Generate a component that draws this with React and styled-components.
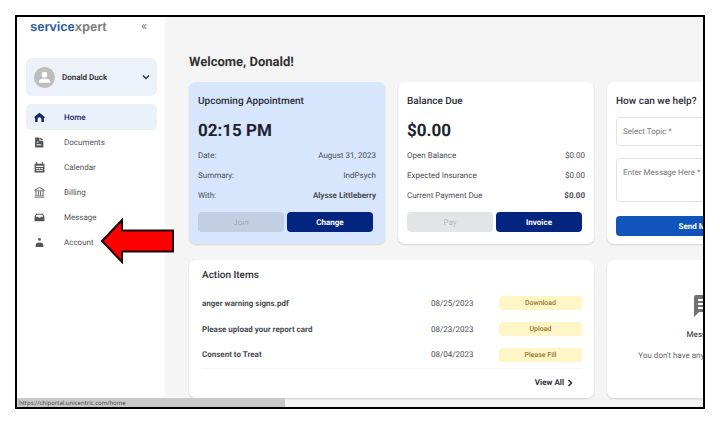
import React from "react";
import styled, { createGlobalStyle } from "styled-components";

const navItems = [
  { label: "Home", icon: "home", active: true },
  { label: "Documents", icon: "documents" },
  { label: "Calendar", icon: "calendar" },
  { label: "Billing", icon: "billing" },
  { label: "Message", icon: "message" },
  { label: "Account", icon: "account", pointed: true },
];

const actionItems = [
  { name: "anger warning signs.pdf", date: "08/25/2023", action: "Download" },
  { name: "Please upload your report card", date: "08/23/2023", action: "Upload" },
  { name: "Consent to Treat", date: "08/04/2023", action: "Please Fill" },
];

const icons = {
  home: (
    <path d="M10 1.500 1 8.500v2.500l1 0V18h4.500v-5a3.500 3.500 0 0 1 7 0v5H18v-7h1V8.500z" />
  ),
  documents: (
    <>
      <path d="M2 1h8v6h7v12H2zM5 8v2h3V8zm0 5v2h8v-2z" fillRule="evenodd" />
      <path d="M11.500 1v4.500H17z" />
    </>
  ),
  calendar: (
    <path
      d="M4 0h2v3h8V0h2v3h3v16H1V3h3zM3 7v2h14V7zm1 4v2h3v-2zm4.500 0v2h3v-2zm4.500 0v2h3v-2zM4 15v1.500h12V15z"
      fillRule="evenodd"
    />
  ),
  billing: (
    <>
      <path
        d="M10 1 1.500 5.500V7h17V5.500zM3.500 8v8M8 8v8M12 8v8M16.500 8v8M1 18.500h18"
        fill="none"
        stroke="currentColor"
        strokeWidth="1.600"
      />
      <path d="M2 15.500h16v1H2z" />
    </>
  ),
  message: (
    <path
      d="M4 3h12l3 5v9H1V8zm1 2L3 8.500h4.500a2.600 2.600 0 0 0 5 0H17L15 5z"
      fillRule="evenodd"
    />
  ),
  account: (
    <>
      <circle cx="10" cy="4.500" r="2.500" />
      <path d="M3 18v-3.500C3 11.500 6 10 10 10s7 1.500 7 4.500V18z" />
    </>
  ),
};

const Icon = ({ name }) => (
  <NavIcon viewBox="0 0 20 20" fill="currentColor" aria-hidden="true">
    {icons[name]}
  </NavIcon>
);

const Sidebar = () => (
  <SidebarWrap>
    <Brand>
      <Logo>
        service<span>xpert</span>
      </Logo>
      <Collapse aria-label="Collapse menu">«</Collapse>
    </Brand>
    <UserButton>
      <Avatar viewBox="0 0 22 22" aria-hidden="true">
        <circle cx="11" cy="11" r="11" fill="#bdbdbd" />
        <circle cx="11" cy="8" r="3" fill="#fff" />
        <path d="M5 16.500v-1.200c0-2.300 3-3.300 6-3.300s6 1 6 3.300v1.200z" fill="#fff" />
      </Avatar>
      <span>Donald Duck</span>
      <Chevron viewBox="0 0 8 8" aria-hidden="true">
        <path d="M1 2.500 4 5.500 7 2.500" />
      </Chevron>
    </UserButton>
    <Nav>
      {navItems.map((item) => (
        <NavLink key={item.label} href="#" $active={item.active}>
          <Icon name={item.icon} />
          {item.label}
          {item.pointed && (
            <Pointer viewBox="0 0 76 46" aria-hidden="true">
              <path d="M2 23 22 2v10.500h51v21H22V44z" />
            </Pointer>
          )}
        </NavLink>
      ))}
    </Nav>
  </SidebarWrap>
);

const SummaryCard = ({ title, value, rows, actions, tinted }) => (
  <Card $tinted={tinted}>
    <CardTitle>{title}</CardTitle>
    <Value>{value}</Value>
    <Details>
      {rows.map(([label, text, strong]) => (
        <DetailRow key={label} $strong={strong}>
          <dt>{label}</dt>
          <dd>{text}</dd>
        </DetailRow>
      ))}
    </Details>
    <ButtonRow>
      <Button disabled>{actions[0]}</Button>
      <Button>{actions[1]}</Button>
    </ButtonRow>
  </Card>
);

const HelpCard = () => (
  <Card>
    <CardTitle>How can we help?</CardTitle>
    <HelpForm>
      <TopicSelect aria-label="Topic" defaultValue="">
        <option value="">Select Topic *</option>
      </TopicSelect>
      <MessageBox aria-label="Message" placeholder="Enter Message Here *" />
      <Button $bright>Send Message</Button>
    </HelpForm>
  </Card>
);

const ActionCard = () => (
  <WideCard>
    <CardTitle>Action Items</CardTitle>
    <ActionTable>
      <tbody>
        {actionItems.map((item) => (
          <tr key={item.name}>
            <NameCell>{item.name}</NameCell>
            <DateCell>{item.date}</DateCell>
            <ActionCell>
              <Pill>{item.action}</Pill>
            </ActionCell>
          </tr>
        ))}
      </tbody>
    </ActionTable>
    <ViewAll href="#">
      View All
      <Arrow viewBox="0 0 8 8" aria-hidden="true">
        <path d="M2.500 1 5.500 4 2.500 7" />
      </Arrow>
    </ViewAll>
  </WideCard>
);

const MessagesCard = () => (
  <EmptyCard>
    <ChatIcon viewBox="0 0 22 22" aria-hidden="true">
      <path
        d="M2 0h18a2 2 0 0 1 2 2v13a2 2 0 0 1-2 2H5l-5 5V2a2 2 0 0 1 2-2zm2 4v2h14V4zm0 4v2h14V8zm0 4v2h10v-2z"
        fillRule="evenodd"
      />
    </ChatIcon>
    <strong>Messages</strong>
    <p>You don't have any unread messages.</p>
  </EmptyCard>
);

const App = () => {
  return (
    <>
      <GlobalStyle />
      <Frame>
        <Shell>
          <Sidebar />
          <Main>
            <Welcome>Welcome, Donald!</Welcome>
            <Grid>
              <SummaryCard
                tinted
                title="Upcoming Appointment"
                value="02:15 PM"
                rows={[
                  ["Date:", "August 31, 2023"],
                  ["Summary:", "IndPsych"],
                  ["With:", "Alysse Littleberry", true],
                ]}
                actions={["Join", "Change"]}
              />
              <SummaryCard
                title="Balance Due"
                value="$0.00"
                rows={[
                  ["Open Balance", "$0.00"],
                  ["Expected Insurance", "$0.00"],
                  ["Current Payment Due", "$0.00", true],
                ]}
                actions={["Pay", "Invoice"]}
              />
              <HelpCard />
              <ActionCard />
              <MessagesCard />
            </Grid>
          </Main>
        </Shell>
        <StatusBar>
          <StatusText>https://chiportal.unicentric.com/home</StatusText>
        </StatusBar>
      </Frame>
    </>
  );
};

export default App;

const GlobalStyle = createGlobalStyle`
  * {
    box-sizing: border-box;
  }
  body {
    margin: 0;
    padding: 15px 15px 0;
    background: #fff;
    font-family: Roboto, "Liberation Sans", sans-serif;
    font-size: 8px;
    color: #4a4d53;
    text-rendering: geometricPrecision;
  }
  button, select, textarea {
    font: inherit;
    color: inherit;
    text-rendering: inherit;
  }
  a {
    color: inherit;
    text-decoration: none;
  }
`;

const Frame = styled.div`
  border: 2px solid #000;
  overflow: hidden;
`;
const Shell = styled.div`
  display: flex;
  background: #f5f5f6;
`;

const SidebarWrap = styled.aside`
  flex: 0 0 148px;
  padding: 0 8px 0 9px;
  background: #fff;
`;
const Brand = styled.div`
  display: flex;
  align-items: center;
  justify-content: space-between;
  height: 18px;
  padding: 0 10px 0 4px;
  margin-bottom: 23px;
`;
const Logo = styled.div`
  font-family: "Liberation Sans", Arial, sans-serif;
  font-size: 13px;
  font-weight: 700;
  color: #2f5f9f;

  & span {
    color: #7d7d7d;
  }
`;
const Collapse = styled.button`
  border: 0;
  padding: 0;
  background: none;
  font-size: 13px;
  color: #777;
`;
const UserButton = styled.button`
  display: flex;
  align-items: center;
  width: 100%;
  height: 38px;
  padding: 0 7px 0 8px;
  border: 0;
  border-radius: 6px;
  background: #edf2f9;
  font-weight: 500;
  color: #222;

  & span {
    flex: 1;
    text-align: left;
  }
`;
const Avatar = styled.svg`
  width: 21px;
  height: 21px;
  margin-right: 7px;
`;
const Chevron = styled.svg`
  width: 8px;
  height: 8px;
  fill: none;
  stroke: #26334d;
  stroke-width: 1.4;
`;
const Nav = styled.nav`
  margin-top: 8px;
`;
const NavLink = styled.a`
  position: relative;
  display: flex;
  align-items: center;
  gap: 19px;
  height: ${(props) => (props.$active ? "26px" : "25px")};
  padding-left: 8px;
  border-radius: 5px;
  background: ${(props) => (props.$active ? "#e9f2fb" : "none")};
  font-weight: ${(props) => (props.$active ? 500 : 400)};
  color: ${(props) => (props.$active ? "#1b2469" : "#555")};
`;
const NavIcon = styled.svg`
  width: 11px;
  height: 11px;
`;
const Pointer = styled.svg`
  position: absolute;
  left: 74px;
  top: -12px;
  z-index: 2;
  width: 76px;
  height: 46px;
  fill: #fe0000;
  stroke: #1c0505;
  stroke-width: 2;
`;

const Main = styled.main`
  flex: 1;
  min-width: 0;
  padding: 37px 0 0 24px;
`;
const Welcome = styled.h1`
  margin: 0 0 10px;
  font-size: 13px;
  line-height: 18px;
  font-weight: 700;
  color: #333;
`;
const Grid = styled.div`
  display: grid;
  grid-template-columns: repeat(3, minmax(196px, 1fr));
  gap: 16px 13px;
`;
const Card = styled.section`
  padding: 13px 9px 8px;
  border-radius: 7px;
  background: ${(props) => (props.$tinted ? "#d7e5fd" : "#fff")};
  box-shadow: 0 1px 2px rgba(0, 0, 0, 0.14);
`;
const CardTitle = styled.h2`
  margin: 0;
  font-size: 10px;
  line-height: 14px;
  font-weight: 500;
  color: #2b2e35;
`;
const Value = styled.div`
  margin: 12px 0 4px;
  font-size: 17px;
  line-height: 20px;
  font-weight: 700;
  color: #1e2330;
`;
const Details = styled.dl`
  margin: 0 0 7px;
`;
const DetailRow = styled.div`
  display: flex;
  align-items: center;
  justify-content: space-between;
  height: 20px;

  & dd {
    margin: 0;
    font-weight: ${(props) => (props.$strong ? 700 : 400)};
  }
`;
const ButtonRow = styled.div`
  display: grid;
  grid-template-columns: 1fr 1fr;
  gap: 3px;
  padding-right: 3px;
`;
const Button = styled.button`
  height: 20px;
  padding: 0;
  border: 0;
  border-radius: 4px;
  background: ${(props) => (props.$bright ? "#1155bb" : "#04257f")};
  font-weight: 700;
  color: #fff;

  &:disabled {
    background: rgba(100, 105, 110, 0.18);
    font-weight: 400;
    color: rgba(90, 95, 105, 0.35);
  }
`;

const HelpForm = styled.form`
  display: flex;
  flex-direction: column;
  margin-top: 8px;
`;
const TopicSelect = styled.select`
  appearance: none;
  height: 29px;
  margin-bottom: 12px;
  padding: 0 6px;
  border: 1px solid #e2e2e4;
  border-radius: 4px;
  background: #fff;
  color: #777;
`;
const MessageBox = styled.textarea`
  height: 44px;
  margin-bottom: 14px;
  padding: 9px 6px;
  border: 1px solid #e2e2e4;
  border-radius: 4px;
  resize: none;

  &::placeholder {
    color: #777;
  }
`;

const WideCard = styled(Card)`
  grid-column: span 2;
  padding: 9px 12px 1px 13px;
`;
const ActionTable = styled.table`
  width: 100%;
  margin-top: 7px;
  border-collapse: collapse;

  & td {
    height: 26px;
    padding: 0;
  }
  & tr:last-child td {
    border-bottom: 1px solid #f6f6f6;
  }
`;
const NameCell = styled.td`
  font-weight: 700;
`;
const DateCell = styled.td`
  width: 68px;
`;
const ActionCell = styled.td`
  width: 83px;
`;
const Pill = styled.button`
  display: block;
  width: 100%;
  height: 14px;
  padding: 0;
  border: 0;
  border-radius: 3px;
  background: #fff6c8;
  font-size: 7px;
  font-weight: 500;
  color: #98762f;
`;
const ViewAll = styled.a`
  display: flex;
  align-items: center;
  justify-content: flex-end;
  gap: 2px;
  height: 28px;
  padding-right: 8px;
  font-weight: 700;
  color: #2b2e35;
`;
const Arrow = styled.svg`
  width: 8px;
  height: 8px;
  fill: none;
  stroke: currentColor;
  stroke-width: 1.5;
`;

const EmptyCard = styled(Card)`
  display: flex;
  flex-direction: column;
  align-items: center;
  padding-top: 35px;

  & strong {
    margin-top: 12px;
    line-height: 12px;
    font-weight: 500;
  }
  & p {
    margin: 9px 0 0;
    line-height: 12px;
    color: #666;
  }
`;
const ChatIcon = styled.svg`
  width: 22px;
  height: 22px;
  fill: #707070;
`;

const StatusBar = styled.footer`
  display: flex;
  height: 9px;
  background: #f3f3f4;
`;
const StatusText = styled.div`
  flex: 0 0 39%;
  padding: 2px 0 0 2px;
  background: #c9c9c9;
  font-family: "Open Sans", "Noto Sans", sans-serif;
  font-size: 6px;
  line-height: 7px;
  color: #444;
`;
